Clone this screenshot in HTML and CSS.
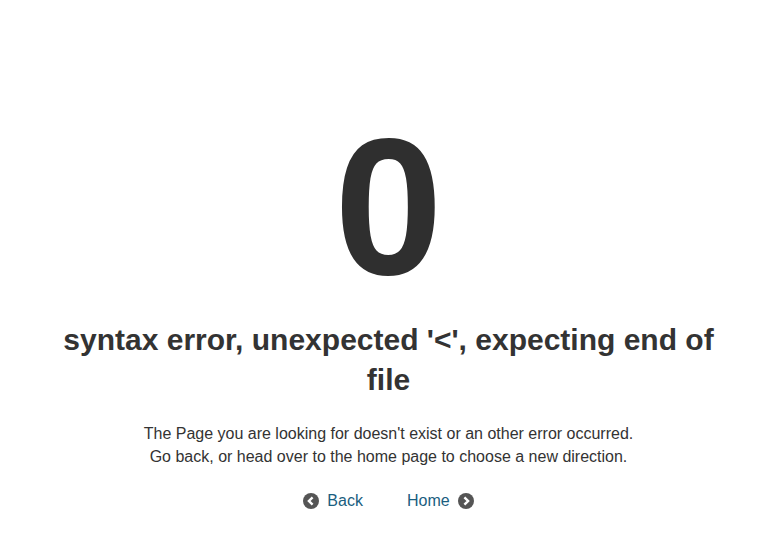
FILE: index.html
```html
<!DOCTYPE html>
<html lang="en">
<head>
    <meta charset="UTF-8">
    <meta name="viewport" content="width=device-width, initial-scale=1.0">
    <title>Error</title>
    <link rel="stylesheet" href="styles.css">
</head>
<body>
    <div class="error-page">
        <div class="error-code">0</div>
        <h1 class="error-title">syntax error, unexpected '&lt;', expecting end of file</h1>
        <p class="error-text">
            The Page you are looking for doesn't exist or an other error occurred.<br>
            Go back, or head over to the home page to choose a new direction.
        </p>
        <div class="error-links">
            <a href="#" class="error-link">
                <svg class="icon" viewBox="0 0 16 16" width="16" height="16">
                    <circle cx="8" cy="8" r="8" fill="#555"/>
                    <path d="M9.6 4.3 L5.9 8 L9.6 11.7" fill="none" stroke="#fff" stroke-width="2.4"/>
                </svg>
                Back
            </a>
            <a href="#" class="error-link">
                Home
                <svg class="icon" viewBox="0 0 16 16" width="16" height="16">
                    <circle cx="8" cy="8" r="8" fill="#555"/>
                    <path d="M6.4 4.3 L10.1 8 L6.4 11.7" fill="none" stroke="#fff" stroke-width="2.4"/>
                </svg>
            </a>
        </div>
    </div>
</body>
</html>
```

FILE: styles.css
```css
body {
    margin: 0;
    background: #fff;
    color: #333;
    font-family: "Liberation Sans", Arial, sans-serif;
}

.error-page {
    max-width: 680px;
    margin: 0 auto;
    padding-top: 109px;
    text-align: center;
}

.error-code {
    font-size: 195px;
    font-weight: bold;
    line-height: 195px;
    color: #2f2f2f;
}

.error-title {
    font-size: 30px;
    font-weight: bold;
    line-height: 40px;
    margin: 16px 0 0;
}

.error-text {
    font-size: 16px;
    line-height: 23px;
    margin: 22px 0 0;
}

.error-links {
    display: flex;
    justify-content: center;
    gap: 44px;
    margin-top: 24px;
}

.error-link {
    display: flex;
    align-items: center;
    gap: 8px;
    font-size: 16px;
    color: #1a5e80;
    text-decoration: none;
}
```
